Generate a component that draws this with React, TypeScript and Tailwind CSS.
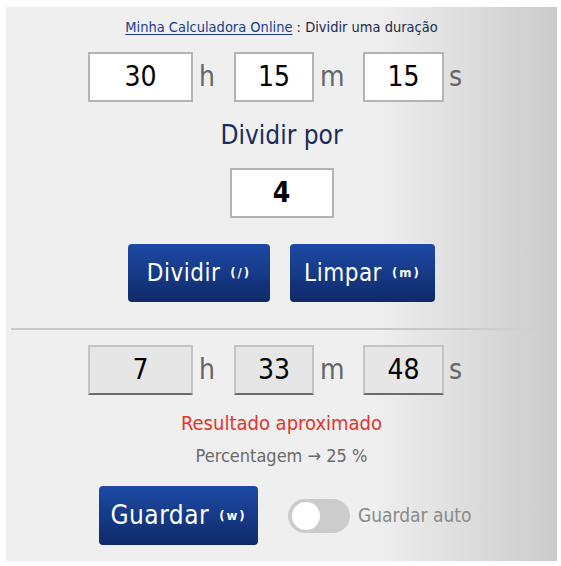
import { useState } from 'react';

const FONT = { fontFamily: '"DejaVu Sans Condensed", "Liberation Sans Narrow", Roboto, sans-serif' };

function TimeBox({ value, result, width }: { value: string; result?: boolean; width: string }) {
  return (
    <div
      className={`${width} flex h-[50px] items-center justify-center text-[28px] text-black ${
        result
          ? 'border-2 border-[#c4c4c4] border-b-[#6b6b6b] bg-[#e6e6e6]'
          : 'border-2 border-[#b4b4b4] bg-white'
      }`}
    >
      {value}
    </div>
  );
}

function TimeRow({ h, m, s, result }: { h: string; m: string; s: string; result?: boolean }) {
  return (
    <div className="flex items-center pl-[82px] text-[#666]">
      <TimeBox value={h} result={result} width="w-[105px]" />
      <span className="w-[41px] pl-[6px] text-[28px] leading-none">h</span>
      <TimeBox value={m} result={result} width="w-[80px]" />
      <span className="w-[49px] pl-[6px] text-[28px] leading-none">m</span>
      <TimeBox value={s} result={result} width="w-[81px]" />
      <span className="pl-[5px] text-[28px] leading-none">s</span>
    </div>
  );
}

function BlueButton({
  label,
  hint,
  className,
  size = 'text-[24px]',
}: {
  label: string;
  hint: string;
  className: string;
  size?: string;
}) {
  return (
    <button
      className={`${className} flex items-center justify-center gap-[10px] rounded-[4px] bg-[linear-gradient(to_bottom,#1d4aa6,#0f2a68)] text-white`}
    >
      <span className={`${size} font-medium tracking-[0.5px]`}>{label}</span>
      <span className="text-[13px] font-bold tracking-[2px]">{hint}</span>
    </button>
  );
}

export default function App() {
  const [auto, setAuto] = useState(false);

  return (
    <div className="min-h-[566px] bg-white pt-[7px] pl-[6px]" style={FONT}>
      <div className="flex h-[554px] w-[551px] flex-col bg-[linear-gradient(to_right,#efefef_67%,#cbcbcb)] pt-[10px]">
        <p className="text-center text-[14.5px] leading-[20px] text-[#1b2a4a]">
          <a href="#" className="text-[#1a3c8c] underline underline-offset-2">
            Minha Calculadora Online
          </a>{' '}
          : Dividir uma duração
        </p>

        <div className="mt-[15px]">
          <TimeRow h="30" m="15" s="15" />
        </div>

        <h2 className="mt-[17px] text-center text-[26px] leading-[32px] font-normal text-[#182d5c]">
          Dividir por
        </h2>

        <div className="mt-[17px] flex justify-center">
          <div className="flex h-[50px] w-[104px] items-center justify-center border-2 border-[#b4b4b4] bg-white text-[28px] font-semibold text-black">
            4
          </div>
        </div>

        <div className="mt-[26px] flex justify-center gap-[20px]">
          <BlueButton label="Dividir" hint="(/)" className="h-[58px] w-[142px]" />
          <BlueButton label="Limpar" hint="(m)" className="h-[58px] w-[145px]" />
        </div>

        <div className="mt-[26px] ml-[5px] mr-[12px] h-[2px] bg-[linear-gradient(to_right,#c8c8c8_85%,transparent)]" />

        <div className="mt-[15px]">
          <TimeRow h="7" m="33" s="48" result />
        </div>

        <p className="mt-[14px] text-center text-[20px] leading-[28px] text-[#e0352b]">
          Resultado aproximado
        </p>
        <p className="mt-[8px] text-center text-[18px] leading-[22px] text-[#6a6a6a]">
          Percentagem → 25 %
        </p>

        <div className="mt-[19px] flex items-center pl-[93px]">
          <BlueButton label="Guardar" hint="(w)" size="text-[26px]" className="h-[59px] w-[159px]" />
          <button
            onClick={() => setAuto(!auto)}
            className={`ml-[30px] flex h-[34px] w-[62px] items-center rounded-full px-[4px] ${
              auto ? 'justify-end bg-[#1d4aa6]' : 'bg-[#cccccc]'
            }`}
          >
            <span className="h-[28px] w-[28px] rounded-full bg-white" />
          </button>
          <span className="ml-[8px] text-[19px] text-[#8a8a8a]">Guardar auto</span>
        </div>
      </div>
    </div>
  );
}
